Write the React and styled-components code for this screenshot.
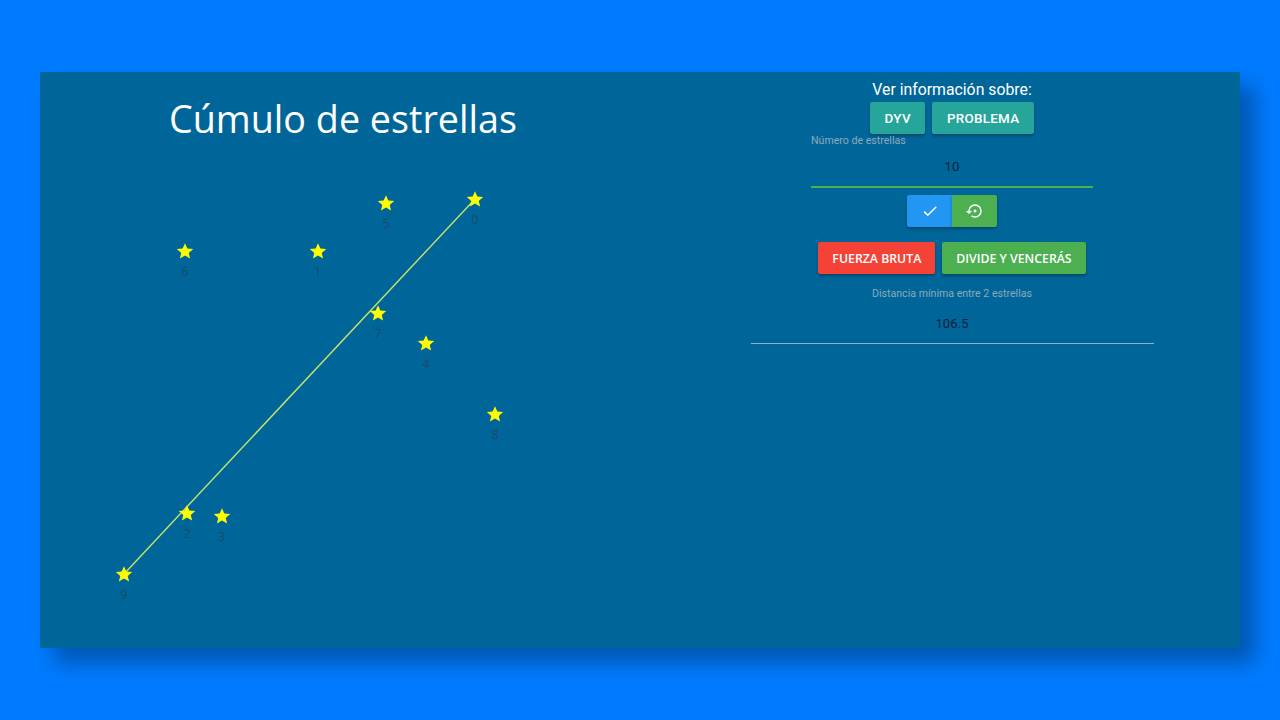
import React from "react";
import styled, { createGlobalStyle } from "styled-components";

const Global = createGlobalStyle`
  html, body { margin: 0; padding: 0; height: 100%; }
  body { background: #007bff; font-family: Roboto, "Liberation Sans", sans-serif; }
`;

const Page = styled.div`
  height: 720px;
  padding: 72px 40px;
  box-sizing: border-box;
`;

const Panel = styled.main`
  display: flex;
  height: 576px;
  background: #006699;
  box-shadow: 15px 15px 20px rgba(0, 0, 0, 0.3);
`;

const Left = styled.section`
  display: flex;
  flex-direction: column;
  width: 624px;
`;

const Title = styled.h1`
  box-sizing: border-box;
  margin: 0;
  padding: 21px 0 0 129px;
  height: 67px;
  font-family: "Comic Sans MS", "Open Sans", sans-serif;
  font-size: 37.7px;
  line-height: 52px;
  font-weight: 400;
  color: #fff;
`;

const Canvas = styled.div`
  position: relative;
  flex: 1;
`;

const Lines = styled.svg`
  position: absolute;
  inset: 0;
  width: 100%;
  height: 100%;
`;

const Star = styled.div.attrs((p) => ({
  style: { left: p.$x - 20, top: p.$y - 9 },
}))`
  position: absolute;
  width: 40px;
  display: flex;
  flex-direction: column;
  align-items: center;
  font-family: "Open Sans", sans-serif;
  font-size: 12px;
  line-height: 14px;
  color: #1a4a6a;
`;

const StarIcon = styled.svg`
  width: 18px;
  height: 18px;
  margin-bottom: 5px;
  fill: #ffff00;
`;

const Right = styled.section`
  flex: 1;
  display: flex;
  flex-direction: column;
  align-items: center;
`;

const Heading = styled.div`
  margin-top: 8px;
  font-size: 15.8px;
  line-height: 20px;
  color: #fff;
`;

const Row = styled.div`
  display: flex;
  gap: ${(p) => p.$gap ?? 7}px;
  margin-top: ${(p) => p.$top ?? 0}px;
`;

const InfoButton = styled.button`
  height: 32px;
  padding: 0 14.5px;
  border: 0;
  border-radius: 2px;
  background: #26a69a;
  color: #fff;
  font-family: Roboto, sans-serif;
  font-size: 13.4px;
  font-weight: 500;
  letter-spacing: 0.3px;
  box-shadow: 0 2px 3px rgba(0, 0, 0, 0.3);
`;

const ActionButton = styled.button`
  height: 32px;
  padding: 0 14px;
  border: 0;
  border-radius: 2px;
  background: ${(p) => p.$bg};
  color: #fff;
  font-family: "Open Sans", sans-serif;
  font-size: 12.3px;
  font-weight: 600;
  box-shadow: 0 2px 3px rgba(0, 0, 0, 0.3);
`;

const IconButton = styled.button`
  display: flex;
  align-items: center;
  justify-content: center;
  width: 45px;
  height: 32px;
  padding: 0;
  border: 0;
  border-radius: ${(p) => (p.$first ? "2px 0 0 2px" : "0 2px 2px 0")};
  background: ${(p) => p.$bg};
  box-shadow: 0 2px 3px rgba(0, 0, 0, 0.3);
  svg {
    width: 18px;
    height: 18px;
    fill: #fff;
  }
`;

const Field = styled.div`
  box-sizing: border-box;
  width: ${(p) => p.$w}px;
  height: ${(p) => p.$h}px;
  margin-top: ${(p) => p.$top ?? 0}px;
  border-bottom: ${(p) => p.$line};
  display: flex;
  flex-direction: column;
`;

const FieldLabel = styled.label`
  font-size: 10.6px;
  line-height: 14px;
  color: #8ea9bb;
  text-align: ${(p) => p.$align ?? "left"};
`;

const FieldValue = styled.div`
  margin-top: ${(p) => p.$top}px;
  font-size: 13.2px;
  line-height: 16px;
  color: #06233a;
  text-align: center;
`;

const stars = [
  [475, 199, 0],
  [318, 251, 1],
  [187, 513, 2],
  [222, 516, 3],
  [426, 343, 4],
  [386, 203, 5],
  [185, 251, 6],
  [378, 313, 7],
  [495, 414, 8],
  [124, 574, 9],
];

// canvas origin on the screenshot
const ox = 40;
const oy = 139;

const App = () => {
  return (
    <Page>
      <Global />
      <Panel>
        <Left>
          <Title>Cúmulo de estrellas</Title>
          <Canvas>
            <Lines>
              <line x1={475 - ox} y1={199 - oy} x2={124 - ox} y2={574 - oy} stroke="#c6e468" strokeWidth="1.4" />
            </Lines>
            {stars.map(([x, y, n]) => (
              <Star key={n} $x={x - ox} $y={y - oy}>
                <StarIcon viewBox="0 0 24 24">
                  <path d="M12 1.5l3.1 7.2 7.8.7-5.9 5.1 1.8 7.6L12 18.1l-6.8 4 1.8-7.6L1.1 9.4l7.8-.7z" />
                </StarIcon>
                {n}
              </Star>
            ))}
          </Canvas>
        </Left>
        <Right>
          <Heading>Ver información sobre:</Heading>
          <Row $top={2}>
            <InfoButton>DYV</InfoButton>
            <InfoButton>PROBLEMA</InfoButton>
          </Row>
          <Field $w={282} $h={54} $line="2px solid #4caf50">
            <FieldLabel>Número de estrellas</FieldLabel>
            <FieldValue $top={11}>10</FieldValue>
          </Field>
          <Row $gap={0} $top={7}>
            <IconButton $first $bg="#2196f3" aria-label="aceptar">
              <svg viewBox="0 0 24 24"><path d="M21,7L9,19L3.5,13.5L4.91,12.09L9,16.17L19.59,5.59L21,7Z" /></svg>
            </IconButton>
            <IconButton $bg="#4caf50" aria-label="reiniciar">
              <svg viewBox="0 0 24 24"><path d="M12,3A9,9 0 0,0 3,12H0L4,16L8,12H5A7,7 0 0,1 12,5A7,7 0 0,1 19,12A7,7 0 0,1 12,19C10.5,19 9.09,18.5 7.94,17.7L6.5,19.14C8.04,20.3 9.94,21 12,21A9,9 0 0,0 21,12A9,9 0 0,0 12,3M14,12A2,2 0 0,0 12,10A2,2 0 0,0 10,12A2,2 0 0,0 12,14A2,2 0 0,0 14,12Z" /></svg>
            </IconButton>
          </Row>
          <Row $top={15}>
            <ActionButton $bg="#f44336">FUERZA BRUTA</ActionButton>
            <ActionButton $bg="#4caf50">DIVIDE Y VENCERÁS</ActionButton>
          </Row>
          <Field $w={403} $h={57} $top={13} $line="1px solid #8fb3c6">
            <FieldLabel $align="center">Distancia mínima entre 2 estrellas</FieldLabel>
            <FieldValue $top={15}>106.5</FieldValue>
          </Field>
        </Right>
      </Panel>
    </Page>
  );
};

export default App;
